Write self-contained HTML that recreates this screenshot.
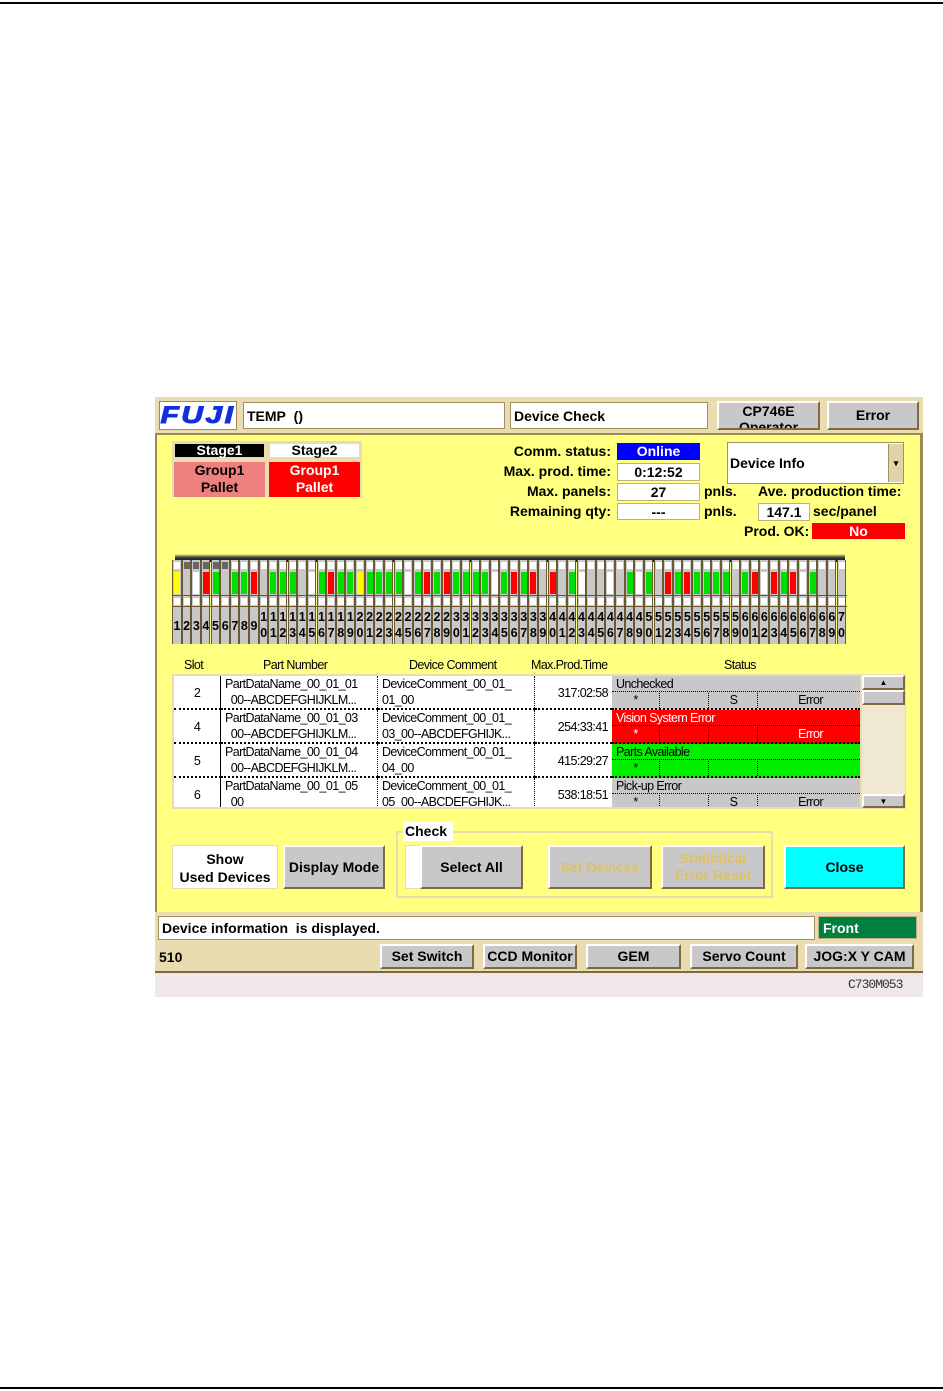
<!DOCTYPE html>
<html><head><meta charset="utf-8"><style>
*{margin:0;padding:0;box-sizing:border-box}
body{width:943px;height:1391px;background:#fff;position:relative;overflow:hidden;font-family:"Liberation Sans",Arial,sans-serif;font-weight:bold;color:#000}
.a{position:absolute}
.box{position:absolute;background:#fff;border:1px solid #a09060;font-size:14px;line-height:17px;padding-left:3px}
.btn{position:absolute;background:#c8c8c8;border:2px solid #fff;border-right-color:#806840;border-bottom-color:#806840;text-align:center;font-size:14px;display:flex;align-items:center;justify-content:center;line-height:17px}
.lbl{position:absolute;font-size:14px;text-align:right}
.val{position:absolute;background:#fff;border:1px solid #c0b080;font-size:14px;text-align:center;line-height:16px}
.slot{position:absolute;top:560px;width:9.6px;height:84px;background:#c8c8c8;border-left:1px solid #6a5a30;border-right:1px solid #6a5a30}
.t{font-family:"Liberation Sans Narrow","Liberation Sans",sans-serif;font-weight:normal;font-size:12.5px;letter-spacing:-0.6px}
</style></head><body>
<div class="a" style="left:0;top:2px;width:943px;height:2px;background:#000"></div>
<div class="a" style="left:0;top:1387px;width:943px;height:2px;background:#000"></div>

<div class="a" style="left:155px;top:397px;width:768px;height:600px;background:#f0e8e8"></div>
<div class="a" style="left:155px;top:397px;width:768px;height:38px;background:#e8dcb0;border-bottom:2px solid #a08850"></div>
<div class="a" style="left:159px;top:401px;width:78px;height:29px;background:#fff;border:1px solid #a08850;overflow:hidden"><div style="color:#1030e0;font-style:italic;font-size:24px;font-weight:900;line-height:27px;text-align:center;letter-spacing:2px;transform:scaleX(1.25);-webkit-text-stroke:1px #1030e0">FUJI</div></div>
<div class="box" style="left:243px;top:402px;width:262px;height:27px;line-height:27px">TEMP&nbsp; ()</div>
<div class="box" style="left:510px;top:402px;width:198px;height:27px;line-height:27px">Device Check</div>
<div class="btn" style="left:717px;top:401px;width:103px;height:29px;font-size:14px;line-height:16px;overflow:hidden;align-items:flex-start">CP746E<br>Operator</div>
<div class="btn" style="left:827px;top:401px;width:92px;height:29px">Error</div>

<div class="a" style="left:155px;top:435px;width:768px;height:477px;background:#ffff80;border-left:2px solid #a08850;border-right:3px solid #a08850"></div>

<div class="a" style="left:172px;top:441px;width:190px;height:56px;background:#e8dcb0"></div>
<div class="a" style="left:175px;top:444px;width:89px;height:13px;background:#000;color:#fff;font-size:14px;line-height:13px;text-align:center">Stage1</div>
<div class="a" style="left:270px;top:444px;width:89px;height:13px;background:#fff;font-size:14px;line-height:13px;text-align:center">Stage2</div>
<div class="a" style="left:174px;top:462px;width:91px;height:35px;background:#f08080;font-size:14px;line-height:17px;text-align:center">Group1<br>Pallet</div>
<div class="a" style="left:269px;top:462px;width:91px;height:35px;background:#ff0000;color:#fff;font-size:14px;line-height:17px;text-align:center">Group1<br>Pallet</div>

<div class="lbl" style="left:450px;top:443px;width:161px">Comm. status:</div>
<div class="lbl" style="left:450px;top:463px;width:161px">Max. prod. time:</div>
<div class="lbl" style="left:450px;top:483px;width:161px">Max. panels:</div>
<div class="lbl" style="left:450px;top:503px;width:161px">Remaining qty:</div>
<div class="val" style="left:617px;top:443px;width:83px;height:17px;background:#0000ff;color:#fff;border:none">Online</div>
<div class="val" style="left:617px;top:463px;width:83px;height:18px">0:12:52</div>
<div class="val" style="left:617px;top:483px;width:83px;height:18px">27</div>
<div class="val" style="left:617px;top:503px;width:83px;height:17px">---</div>
<div class="a" style="left:704px;top:483px;font-size:14px">pnls.</div>
<div class="a" style="left:704px;top:503px;font-size:14px">pnls.</div>
<div class="box" style="left:727px;top:442px;width:177px;height:42px;line-height:40px;padding-left:2px">Device Info</div>
<div class="a" style="left:888px;top:444px;width:15px;height:38px;background:#e0d4a8;border-left:1px solid #a09060;font-size:9px;text-align:center;line-height:38px">▾</div>
<div class="a" style="left:758px;top:483px;font-size:14px">Ave. production time:</div>
<div class="val" style="left:758px;top:503px;width:52px;height:18px">147.1</div>
<div class="a" style="left:813px;top:503px;font-size:14px">sec/panel</div>
<div class="a" style="left:744px;top:523px;font-size:14px">Prod. OK:</div>
<div class="a" style="left:812px;top:523px;width:93px;height:16px;background:#f00;color:#fff;font-size:14px;line-height:16px;text-align:center">No</div>

<div class="a" style="left:175px;top:554px;width:670px;height:8px;background:linear-gradient(#ffff80,#444 40%,#000)"></div>
<div id="slots"></div>

<div class="a t" style="left:184px;top:658px;font-size:12.5px">Slot</div>
<div class="a t" style="left:263px;top:658px">Part Number</div>
<div class="a t" style="left:409px;top:658px">Device Comment</div>
<div class="a t" style="left:531px;top:658px">Max.Prod.Time</div>
<div class="a t" style="left:724px;top:658px">Status</div>
<div class="a" style="left:172px;top:674px;width:734px;height:135px;background:#e8dcb0"></div>
<div class="a" style="left:174px;top:676px;width:686px;height:131px;background:#fff;overflow:hidden" id="rows"></div>
<div class="a" style="left:862px;top:676px;width:43px;height:131px;background:#f0e8d0"></div>
<div class="btn" style="left:862px;top:675px;width:43px;height:15px;font-size:8px">▲</div>
<div class="btn" style="left:862px;top:690px;width:43px;height:15px"></div>
<div class="btn" style="left:862px;top:794px;width:43px;height:14px;font-size:8px">▼</div>

<div class="a" style="left:172px;top:845px;width:106px;height:44px;background:#fff;border:1px solid #e8dcb0;font-size:14px;text-align:center;line-height:18px;padding-top:4px">Show<br>Used Devices</div>
<div class="btn" style="left:283px;top:845px;width:102px;height:44px">Display Mode</div>
<div class="a" style="left:396px;top:831px;width:377px;height:67px;border:2px solid #e8dcb0"></div>
<div class="a" style="left:403px;top:822px;width:50px;height:19px;background:#fff;font-size:14px;line-height:19px;padding-left:2px">Check</div>
<div class="a" style="left:405px;top:845px;width:16px;height:44px;background:#fff;border:1px solid #e8dcb0"></div>
<div class="btn" style="left:420px;top:845px;width:103px;height:44px">Select All</div>
<div class="btn" style="left:548px;top:845px;width:104px;height:44px;color:#e0c060">Set Devices</div>
<div class="btn" style="left:661px;top:845px;width:104px;height:44px;color:#e0c060">Statistical<br>Error Reset</div>
<div class="btn" style="left:784px;top:845px;width:121px;height:44px;background:#00ffff">Close</div>

<div class="a" style="left:155px;top:912px;width:768px;height:61px;background:#e8dcb0;border-bottom:2px solid #806840"></div>
<div class="box" style="left:158px;top:916px;width:657px;height:24px;line-height:23px">Device information&nbsp; is displayed.</div>
<div class="a" style="left:818px;top:916px;width:99px;height:23px;background:#008040;color:#fff;font-size:14px;line-height:23px;padding-left:4px;border:1px solid #c0b080">Front</div>
<div class="a" style="left:159px;top:949px;font-size:14px">510</div>
<div class="btn" style="left:380px;top:944px;width:94px;height:25px">Set Switch</div>
<div class="btn" style="left:483px;top:944px;width:94px;height:25px">CCD Monitor</div>
<div class="btn" style="left:586px;top:944px;width:95px;height:25px">GEM</div>
<div class="btn" style="left:690px;top:944px;width:108px;height:25px">Servo Count</div>
<div class="btn" style="left:805px;top:944px;width:109px;height:25px">JOG:X Y CAM</div>
<div class="a" style="left:848px;top:977px;font-family:'Liberation Mono',monospace;font-weight:normal;font-size:13px;color:#333;letter-spacing:-1px">C730M053</div>

<script>
var c="yswrgsggrsgggswgrggyggggwgrgrggggwgrgrsrsgwsswsgwgsrgrggggsgrwrgrwgss";
var col={y:"#ffff00",s:"#c8c8c8",w:"#ffffff",r:"#ff0000",g:"#00e000"};
var h="";
for(var i=0;i<70;i++){
 var x=172+i*9.63;
 var n=i+1, num=n<10?"<div style='position:absolute;top:59px;left:-2px;width:12px;text-align:center;font-size:12.5px'>"+n+"</div>":"<div style='position:absolute;top:49px;left:-2px;width:12px;text-align:center;font-size:12.5px;line-height:16px'>"+Math.floor(n/10)+"<br>"+(n%10)+"</div>";
 var sq=(i>0&&i<6)?"#666":"#fff";
 h+="<div class='slot' style='left:"+x.toFixed(1)+"px'><div style='position:absolute;left:1px;top:2px;width:6px;height:7px;background:"+sq+"'></div><div style='position:absolute;left:1px;top:12px;width:6px;height:22px;background:"+col[c[i]]+"'></div><div style='position:absolute;left:-1px;top:35px;width:10px;height:1px;background:#6a5a30'></div><div style='position:absolute;left:1px;top:38px;width:6px;height:7px;background:#fff'></div><div style='position:absolute;left:-1px;top:46px;width:10px;height:1px;background:#6a5a30'></div>"+num+"</div>";
}
document.getElementById("slots").innerHTML=h;
var R=[["2","PartDataName_00_01_01","00--ABCDEFGHIJKLM...","DeviceComment_00_01_","01_00","317:02:58","Unchecked","#c8c8c8","#000",["*","","S","Error"]],
["4","PartDataName_00_01_03","00--ABCDEFGHIJKLM...","DeviceComment_00_01_","03_00--ABCDEFGHIJK...","254:33:41","Vision System Error","#ff0000","#fff",["*","","","Error"]],
["5","PartDataName_00_01_04","00--ABCDEFGHIJKLM...","DeviceComment_00_01_","04_00","415:29:27","Parts Available","#00f000","#000",["*","","",""]],
["6","PartDataName_00_01_05","00","DeviceComment_00_01_","05_00--ABCDEFGHIJK...","538:18:51","Pick-up Error","#c8c8c8","#000",["*","","S","Error"]]];
var r="";
R.forEach(function(d,k){
 var y=k*34;
 var s="position:absolute;top:"+y+"px;height:34px;border-bottom:2px dotted #000;";
 r+="<div class='t' style='"+s+"left:0;width:47px;text-align:center;line-height:34px;border-right:1px solid #000'>"+d[0]+"</div>";
 r+="<div class='t' style='"+s+"left:47px;width:157px;border-right:1px dotted #000;line-height:16px;padding-left:4px'>"+d[1]+"<br>&nbsp;&nbsp;"+d[2]+"</div>";
 r+="<div class='t' style='"+s+"left:204px;width:157px;border-right:1px dotted #000;line-height:16px;padding-left:4px'>"+d[3]+"<br>"+d[4]+"</div>";
 r+="<div class='t' style='"+s+"left:361px;width:77px;line-height:34px;text-align:right;padding-right:4px'>"+d[5]+"</div>";
 r+="<div class='t' style='"+s+"left:438px;width:248px;background:"+d[7]+";color:"+d[8]+"'><div style='height:16px;line-height:16px;padding-left:4px;border-bottom:1px dotted #000'>"+d[6]+"</div>";
 var w=[48,48,48,104];var xx=0;
 d[9].forEach(function(t,j){r+="<div style='position:absolute;top:17px;left:"+xx+"px;width:"+w[j]+"px;height:15px;line-height:15px;text-align:center;border-right:1px dotted #000'>"+t+"</div>";xx+=w[j]+1;});
 r+="</div>";
});
document.getElementById("rows").innerHTML=r;
</script>
</body></html>
